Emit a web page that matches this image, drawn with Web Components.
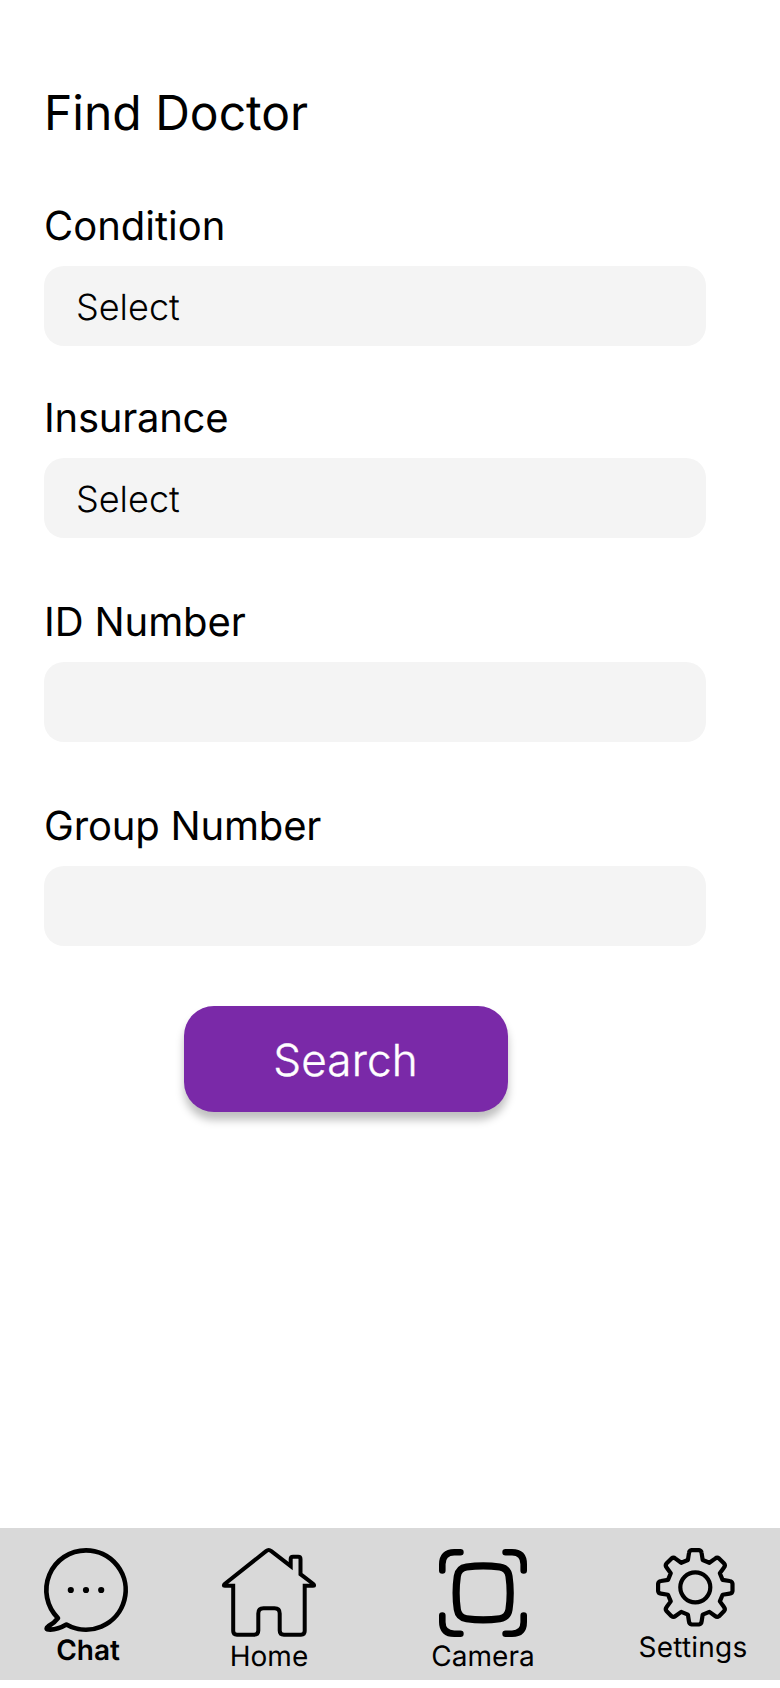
<!DOCTYPE html>
<html lang="en">
<head>
<meta charset="utf-8">
<title>Find Doctor</title>
<style>
html,body{margin:0;background:#fff}
body{font-family:Inter,"Liberation Sans",sans-serif;color:#000;text-rendering:geometricPrecision}
</style>
</head>
<body>
<doctor-page>
  <page-title>Find Doctor</page-title>
  <form-field label="Condition">Select</form-field>
  <form-field label="Insurance" style="--gap:48px;--track:-.25px">Select</form-field>
  <form-field label="ID Number" style="--gap:60px;--track:-.1px"></form-field>
  <form-field label="Group Number" style="--gap:60px;--track:-.18px"></form-field>
  <action-button>Search</action-button>
  <tab-bar slot="footer">
    <tab-item icon="chat" style="--w:84px;--weight:600;--shift:2px;--lift:1px">Chat</tab-item>
    <tab-item icon="home" style="--w:94px;--before:94px;--lift:2px">Home</tab-item>
    <tab-item icon="camera" style="--w:102px;--before:116px;--drop:1px;--lift:2px">Camera</tab-item>
    <tab-item icon="settings" style="--w:110px;--before:104px;--nudge:4px;--lift:3px;--track:.2px">Settings</tab-item>
  </tab-bar>
</doctor-page>
<script>
const define = (name, html, setup) => customElements.define(name, class extends HTMLElement {
  constructor() {
    super();
    this.attachShadow({mode: 'open'}).innerHTML = html;
  }
  connectedCallback() { if (setup) setup(this, this.shadowRoot); }
});

define('doctor-page', `<style>
:host{display:flex;flex-direction:column;box-sizing:border-box;height:1688px;padding-bottom:8px;background:#fff;overflow:hidden}
main{flex:1;padding:84px 74px 0 44px;display:flex;flex-direction:column}
</style><main><slot></slot></main><slot name="footer"></slot>`);

define('page-title', `<style>
:host{display:block;margin-bottom:60px}
h1{margin:0;font-size:48px;line-height:58px;font-weight:400}
</style><h1><slot></slot></h1>`);

define('form-field', `<style>
:host{display:block;margin-top:var(--gap,0)}
.label{font-size:40px;line-height:48px;margin-bottom:16px;letter-spacing:var(--track,0)}
.box{display:flex;align-items:center;box-sizing:border-box;height:80px;padding:2px 32px 0;border-radius:20px;background:#f4f4f4;font-size:36px;font-weight:300}
</style><div class="label"></div><div class="box"><slot></slot></div>`,
(el, root) => { root.querySelector('.label').textContent = el.getAttribute('label'); });

define('action-button', `<style>
:host{display:block;margin:60px 0 0 140px}
button{display:block;width:324px;height:106px;border:0;border-radius:30px;padding:2px 1px 0 0;background:#7a29a8;color:#fff;font:300 44px/53px Inter,"Liberation Sans",sans-serif;letter-spacing:.15px;-webkit-text-stroke:.4px #fff;text-rendering:inherit;box-shadow:0 8px 8px rgba(0,0,0,.25)}
</style><button><slot></slot></button>`);

define('tab-bar', `<style>
:host{display:flex;align-items:flex-start;box-sizing:border-box;height:152px;padding:20px 0 0 44px;background:#d9d9d9}
</style><slot></slot>`);

// One gear tooth repeated eight times, with softened outer corners.
const gear = () => {
  const tooth = [[-7.4,-27.3],[-6.3,-34.3],[-6,-36.9],[-3.6,-37.2],[3.6,-37.2],[6,-36.9],[6.3,-34.3],[7.4,-27.3]];
  let d = '';
  for (let i = 0; i < 8; i++) {
    const a = i * Math.PI / 4, c = Math.cos(a), s = Math.sin(a);
    const p = tooth.map(([x, y]) => (39.3 + x*c - y*s).toFixed(2) + ' ' + (39.3 + x*s + y*c).toFixed(2));
    d += `${i ? 'L' : 'M'}${p[0]}L${p[1]}Q${p[2]} ${p[3]}L${p[4]}Q${p[5]} ${p[6]}L${p[7]}`;
  }
  return d + 'Z';
};
const icons = {
  chat: [84, 84, `<path stroke-width="4.7" d="M13.95 70.05A39.67 39.67 0 0 1 42 2.33A39.67 39.67 0 1 1 22.4 76.5C16.5 80 10 82 4.4 81.5C2 81.3 2.3 79.6 4.2 78.4C9 75.6 11.8 73 13.95 70.05Z"/><g fill="#000" stroke="none"><circle cx="26.8" cy="42" r="3.1"/><circle cx="42" cy="42" r="3.1"/><circle cx="57.2" cy="42" r="3.1"/></g>`],
  home: [94, 89, `<path stroke-width="4" stroke-linejoin="miter" d="M44.1 3.1L3 35.7Q.8 37.7 3 37.7H11.2V83Q11.2 86.7 15 86.7H32Q36.3 86.7 36.3 82.5V65.5Q36.3 60.3 41.5 60.3H52.5Q57.7 60.3 57.7 65.5V82.5Q57.7 86.7 62 86.7H79Q82.7 86.7 82.7 83V37.7H91Q93.2 37.7 91 35.7L78.5 26.2V11Q78.5 8.7 76.2 8.7H71Q68.7 8.7 68.7 11V18.2L49.3 3.1Q46.7 1 44.1 3.1Z"/>`],
  camera: [88, 88, `<path stroke-width="6.6" d="M3.3 21.4V15.3Q3.3 3.3 15.3 3.3H21.4M66.6 3.3H73Q84.7 3.3 84.7 15.3V21.4M84.7 66.6V73Q84.7 84.7 73 84.7H66.6M21.4 84.7H15.3Q3.3 84.7 3.3 73V66.6"/><path stroke-width="7.2" d="M27.5 18Q44.2 15.6 60.8 18Q68.8 19.2 70 27.3Q72.4 43.9 70 60.5Q68.8 68.5 60.8 69.7Q44.2 72.1 27.5 69.7Q19.5 68.5 18.3 60.5Q15.9 43.9 18.3 27.3Q19.5 19.2 27.5 18Z"/>`],
  settings: [79, 79, `<path stroke-width="4.2" d="${gear()}"/><circle cx="39.3" cy="39.3" r="15" stroke-width="4.2"/>`]
};

define('tab-item', `<style>
:host{display:flex;flex:none;flex-direction:column;align-items:center;width:var(--w);margin-left:var(--before,0)}
.icon{display:flex;padding:var(--drop,0) 0 0 var(--nudge,0)}
svg{display:block;overflow:visible;fill:none;stroke:#000;stroke-linecap:round;stroke-linejoin:round}
.text{font-size:28px;line-height:34px;font-weight:var(--weight,400);letter-spacing:var(--track,0);white-space:nowrap;padding-left:calc(var(--shift,0px) * 2);margin-top:var(--lift,0)}
</style><div class="icon"></div><div class="text"><slot></slot></div>`,
(el, root) => {
  const [w, h, art] = icons[el.getAttribute('icon')];
  root.querySelector('.icon').innerHTML = `<svg width="${w}" height="${h}" viewBox="0 0 ${w} ${h}">${art}</svg>`;
});
</script>
</body>
</html>
